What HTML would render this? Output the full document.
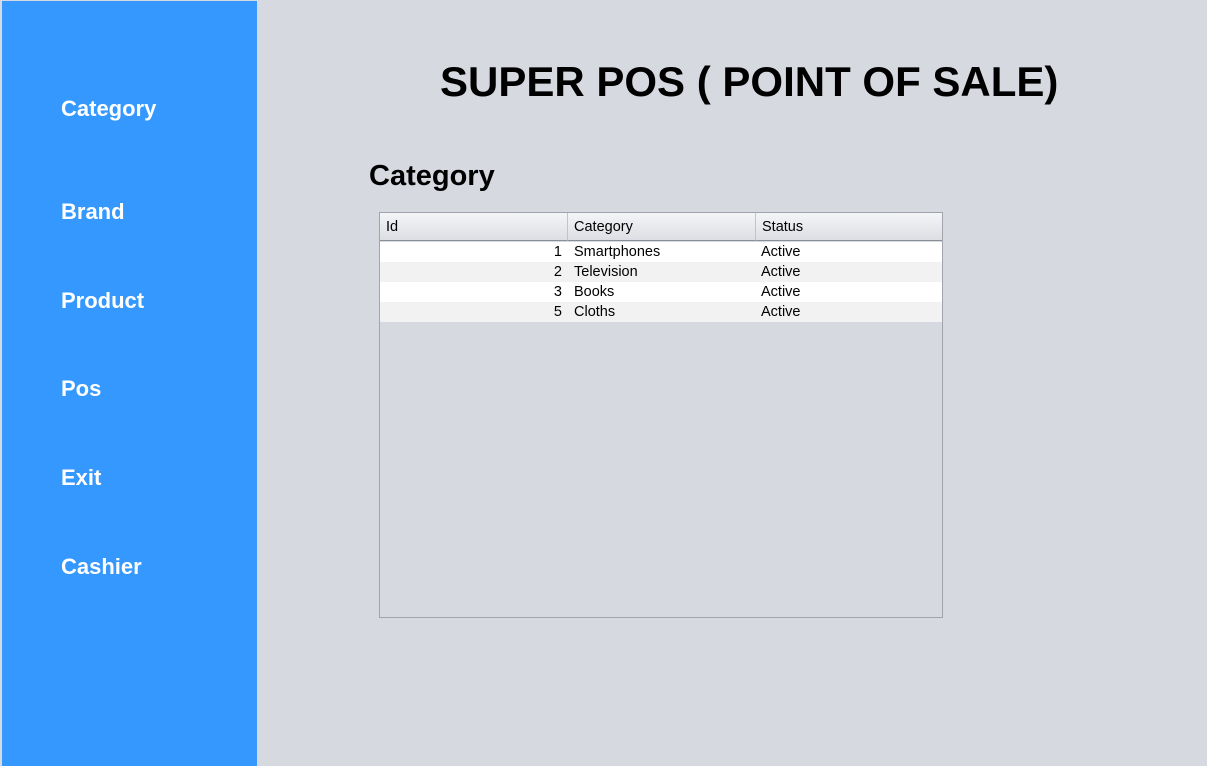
<!DOCTYPE html>
<html><head><style>
body{margin:0;width:1207px;height:766px;background:#d6d9e0;position:relative;overflow:hidden;font-family:"Liberation Sans",sans-serif}
#side{position:absolute;left:2px;top:1px;width:255px;height:765px;background:#3598fe}
.nav{position:absolute;left:59px;color:#fff;font-weight:bold;font-size:22px}
h1{position:absolute;left:440px;top:58px;margin:0;font-size:42px;font-weight:bold;white-space:nowrap}
h2{position:absolute;left:369px;top:160px;margin:0;font-size:29px;font-weight:bold}
#tbl{position:absolute;left:379px;top:212px;width:562px;height:404px;border:1px solid #a0a4ac;background:#d6d9e0}
.hd{position:absolute;top:0;height:28px;background:linear-gradient(#f4f5f7,#dcdee3);border-bottom:1px solid #8a8e96;font-size:14.5px;line-height:28px;box-sizing:border-box;padding-left:6px;border-right:1px solid #c0c3c9}
.row{position:absolute;left:0;width:562px;height:20px;font-size:14.5px;line-height:20px}
.row span{position:absolute}
</style></head><body>
<div id="side">
<div class="nav" style="top:95px">Category</div>
<div class="nav" style="top:198px">Brand</div>
<div class="nav" style="top:287px">Product</div>
<div class="nav" style="top:375px">Pos</div>
<div class="nav" style="top:464px">Exit</div>
<div class="nav" style="top:553px">Cashier</div>
</div>
<h1>SUPER POS ( POINT OF SALE)</h1>
<h2>Category</h2>
<div id="tbl">
<div class="hd" style="left:0;width:188px">Id</div>
<div class="hd" style="left:188px;width:188px">Category</div>
<div class="hd" style="left:376px;width:186px;border-right:none">Status</div>
<div class="row" style="top:29px;background:#fff"><span style="right:380px">1</span><span style="left:194px">Smartphones</span><span style="left:381px">Active</span></div>
<div class="row" style="top:49px;background:#f2f2f2"><span style="right:380px">2</span><span style="left:194px">Television</span><span style="left:381px">Active</span></div>
<div class="row" style="top:69px;background:#fff"><span style="right:380px">3</span><span style="left:194px">Books</span><span style="left:381px">Active</span></div>
<div class="row" style="top:89px;background:#f2f2f2"><span style="right:380px">5</span><span style="left:194px">Cloths</span><span style="left:381px">Active</span></div>
</div>
</body></html>
